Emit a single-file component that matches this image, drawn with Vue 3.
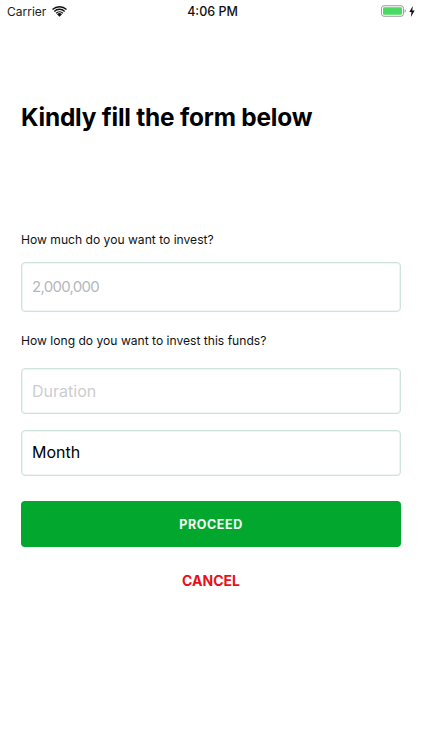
<script setup>
</script>

<template>
  <div class="screen">
    <div class="status">
      <div class="status-left">
        <span>Carrier</span>
        <svg class="wifi" width="15" height="11" viewBox="0 0 15 11">
          <path d="M7.5 10.8 5 8.2a3.5 3.5 0 0 1 5 0Z" fill="#111" />
          <path d="M3.6 6.8a5.6 5.6 0 0 1 7.8 0l-.95 1a4.2 4.2 0 0 0-5.9 0Z" fill="#111" />
          <path d="M1.8 4.9a8.2 8.2 0 0 1 11.4 0l-.95 1a6.8 6.8 0 0 0-9.5 0Z" fill="#111" />
          <path d="M0 3.1a10.8 10.8 0 0 1 15 0l-.95 1a9.4 9.4 0 0 0-13.1 0Z" fill="#111" />
        </svg>
      </div>
      <div class="status-time">4:06 PM</div>
      <div class="status-right">
        <svg width="25" height="12" viewBox="0 0 25 12">
          <rect x="0.5" y="0.75" width="22" height="10.5" rx="2.5" fill="none" stroke="#9a9a9a" stroke-width="1" />
          <rect x="2" y="2.25" width="19" height="7.5" rx="1.2" fill="#4cd964" />
          <path d="M23.7 4.2c.8.3 1.1 1 1.1 1.8s-.3 1.5-1.1 1.8Z" fill="#9a9a9a" />
        </svg>
        <svg width="6" height="11" viewBox="0 0 6 11">
          <path d="M3.8 0 0.3 6.1h2.2L1.9 11 5.7 4.6H3.3Z" fill="#111" />
        </svg>
      </div>
    </div>

    <h1 class="title">Kindly fill the form below</h1>

    <form class="form" @submit.prevent>
      <label class="label" for="amount">How much do you want to invest?</label>
      <input id="amount" class="field field-tall" type="text" placeholder="2,000,000" />

      <label class="label label-second" for="duration">How long do you want to invest this funds?</label>
      <input id="duration" class="field" type="text" placeholder="Duration" />
      <input class="field field-month" type="text" value="Month" aria-label="Period" />

      <button class="proceed" type="submit">PROCEED</button>
      <button class="cancel" type="button">CANCEL</button>
    </form>
  </div>
</template>

<style scoped>
.screen {
  width: 422px;
  height: 750px;
  background: #fff;
  font-family: Inter, "Liberation Sans", sans-serif;
  color: #000;
  overflow: hidden;
}
.status {
  height: 22px;
  display: grid;
  grid-template-columns: 1fr auto 1fr;
  align-items: center;
  padding: 0 7px;
  font-size: 12px;
  color: #222;
}
.status-left {
  display: flex;
  align-items: center;
  gap: 6px;
}
.status-time {
  font-size: 12.5px;
  font-weight: 500;
  color: #111;
  margin-left: 3px;
}
.status-right {
  display: flex;
  justify-content: flex-end;
  align-items: center;
  gap: 3px;
}
.title {
  margin: 79px 0 0;
  padding: 0 21px;
  font-size: 24.4px;
  line-height: 32px;
  font-weight: 700;
  letter-spacing: -0.2px;
}
.form {
  display: flex;
  flex-direction: column;
  padding: 0 21px;
  margin-top: 99px;
}
.label {
  font-size: 12.1px;
  line-height: 16px;
  color: #111;
}
.label-second {
  margin-top: 21px;
}
.field {
  box-sizing: border-box;
  width: 100%;
  height: 46px;
  margin-top: 19px;
  padding: 0 10px 1px;
  border: 1px solid #cfe2dd;
  border-radius: 4px;
  box-shadow: inset 0 0 0 1px #eef5f3;
  background: #fff;
  font: inherit;
  font-size: 16px;
  color: #111;
  outline: none;
}
.field::placeholder {
  color: #cbcdd0;
  opacity: 1;
}
.field-tall {
  height: 50px;
  margin-top: 14px;
  font-size: 15px;
  letter-spacing: -0.7px;
}
.field-tall::placeholder {
  color: #b4b8bb;
}
.field-month {
  margin-top: 16px;
  padding-bottom: 3px;
  color: #000;
}
.proceed {
  height: 46px;
  margin-top: 25px;
  border: none;
  border-radius: 4px;
  background: #02a82e;
  color: #f4fbf5;
  font: inherit;
  font-size: 12.5px;
  font-weight: 700;
  letter-spacing: 0.6px;
}
.cancel {
  align-self: center;
  margin-top: 24px;
  padding: 0;
  border: none;
  background: none;
  color: #e8101a;
  font: inherit;
  font-size: 14px;
  line-height: 20px;
  font-weight: 700;
}
</style>
